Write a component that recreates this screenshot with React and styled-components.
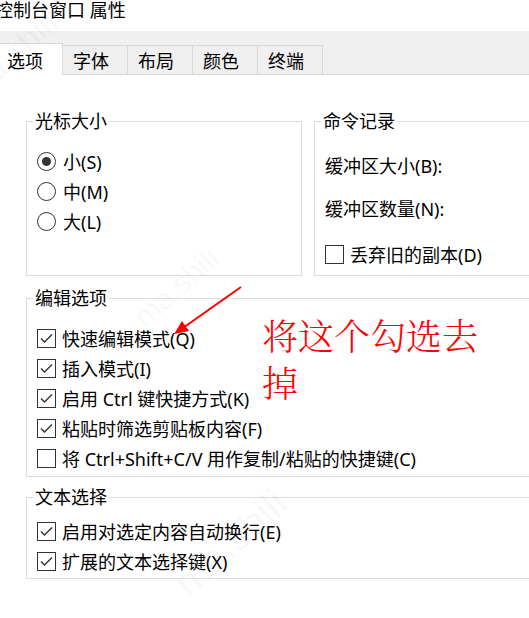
import React from "react";
import styled, { createGlobalStyle } from "styled-components";

const GlobalStyle = createGlobalStyle`
  html, body {
    margin: 0;
    padding: 0;
    background: #ffffff;
    overflow: hidden;
  }
  body {
    font-family: "Noto Sans", "Noto Sans CJK SC", "Microsoft YaHei", sans-serif;
    color: #000000;
  }
`;

const Page = styled.div`
  position: relative;
  width: 529px;
  height: 618px;
  overflow: hidden;
  background: #ffffff;
`;

const TitleBar = styled.div`
  height: 31px;
  margin-left: -5px;
  font-size: 18px;
  line-height: 20px;
  white-space: nowrap;
`;

const TabBar = styled.div`
  display: flex;
  align-items: flex-end;
  height: 43px;
  background: #f0f0f0;
  border-bottom: 1px solid #d9d9d9;
`;

const Tab = styled.div`
  position: relative;
  box-sizing: border-box;
  display: flex;
  align-items: center;
  height: ${(p) => (p.$active ? 32 : 29)}px;
  margin-bottom: ${(p) => (p.$active ? -1 : 0)}px;
  padding: ${(p) => (p.$active ? "0 19px 0 7px" : "0 18px 0 10px")};
  background: ${(p) => (p.$active ? "#ffffff" : "#f0f0f0")};
  border-top: 1px solid #d9d9d9;
  border-right: 1px solid #d9d9d9;
  font-size: 18px;
  white-space: nowrap;
`;

const Content = styled.div`
  display: flex;
  flex-direction: column;
  padding: 36px 0 0 26px;
`;

const TopRow = styled.div`
  display: flex;
  gap: 12px;
`;

const Group = styled.fieldset`
  box-sizing: border-box;
  flex: none;
  min-width: 0;
  width: ${(p) => p.$w}px;
  height: ${(p) => (p.$h ? `${p.$h}px` : "auto")};
  margin: ${(p) => p.$mt || 0}px 0 0 0;
  padding: ${(p) => p.$pt}px 0 ${(p) => p.$pb || 0}px 10px;
  border: 1px solid #dcdcdc;
  display: flex;
  flex-direction: column;
`;

const Legend = styled.legend`
  margin-left: -4px;
  padding: 0 2px;
  font-size: 18px;
  line-height: 20px;
  white-space: nowrap;
`;

const Row = styled.div`
  display: flex;
  align-items: center;
  gap: ${(p) => p.$gap || 6}px;
  height: 30px;
  margin-top: ${(p) => p.$mt || 0}px;
  font-size: 18px;
  white-space: nowrap;
`;

const RadioCircle = styled.span`
  box-sizing: border-box;
  flex: none;
  width: 19px;
  height: 19px;
  border: 1px solid #333333;
  border-radius: 50%;
  display: flex;
  align-items: center;
  justify-content: center;

  &::after {
    content: "";
    display: ${(p) => (p.$on ? "block" : "none")};
    width: 9px;
    height: 9px;
    border-radius: 50%;
    background: #333333;
  }
`;

const Box = styled.span`
  box-sizing: border-box;
  flex: none;
  width: 19px;
  height: 19px;
  border: 1px solid #333333;
  display: flex;
  align-items: center;
  justify-content: center;
`;

const Annotation = styled.div`
  position: absolute;
  left: 262px;
  top: 311px;
  width: 225px;
  font-family: "Noto Serif CJK SC", "Noto Sans CJK SC", serif;
  font-weight: 300;
  font-size: 36px;
  line-height: 47px;
  color: #ff0000;
`;

const ArrowSvg = styled.svg`
  position: absolute;
  left: 165px;
  top: 280px;
`;

const Watermark = styled.span`
  position: absolute;
  left: ${(p) => p.$x}px;
  top: ${(p) => p.$y}px;
  transform: rotate(-42deg);
  transform-origin: left bottom;
  font-family: "Liberation Sans", sans-serif;
  font-size: ${(p) => p.$size}px;
  color: rgba(0, 0, 0, 0.035);
  white-space: nowrap;
  pointer-events: none;
`;

const Radio = ({ on, children }) => (
  <Row $gap={7}>
    <RadioCircle $on={on} />
    {children}
  </Row>
);

const Check = ({ on, mt, children }) => (
  <Row $mt={mt}>
    <Box>
      {on && (
        <svg width="13" height="11" viewBox="0 0 13 11">
          <polyline points="1,5.5 4.5,9 12,1.5" fill="none" stroke="#333" strokeWidth="1.4" />
        </svg>
      )}
    </Box>
    {children}
  </Row>
);

const tabs = ["选项", "字体", "布局", "颜色", "终端"];

const App = () => {
  return (
    <Page>
      <GlobalStyle />
      <TitleBar>控制台窗口 属性</TitleBar>

      <TabBar>
        {tabs.map((t, i) => (
          <Tab key={t} $active={i === 0}>
            {t}
          </Tab>
        ))}
      </TabBar>

      <Content>
        <TopRow>
          <Group $w={276} $h={165} $pt={15}>
            <Legend>光标大小</Legend>
            <Radio on>小(S)</Radio>
            <Radio>中(M)</Radio>
            <Radio>大(L)</Radio>
          </Group>

          <Group $w={400} $h={165} $pt={19}>
            <Legend>命令记录</Legend>
            <Row>缓冲区大小(B):</Row>
            <Row $mt={13}>缓冲区数量(N):</Row>
            <Check mt={16}>丢弃旧的副本(D)</Check>
          </Group>
        </TopRow>

        <Group $w={560} $mt={12} $pt={15} $pb={3}>
          <Legend>编辑选项</Legend>
          <Check on>快速编辑模式(Q)</Check>
          <Check on>插入模式(I)</Check>
          <Check on>启用 Ctrl 键快捷方式(K)</Check>
          <Check on>粘贴时筛选剪贴板内容(F)</Check>
          <Check>将 Ctrl+Shift+C/V 用作复制/粘贴的快捷键(C)</Check>
        </Group>

        <Group $w={560} $mt={10} $pt={9} $pb={2}>
          <Legend>文本选择</Legend>
          <Check on>启用对选定内容自动换行(E)</Check>
          <Check on>扩展的文本选择键(X)</Check>
        </Group>
      </Content>

      <Watermark $x={-20} $y={70} $size={34}>ma.shili</Watermark>
      <Watermark $x={150} $y={300} $size={30}>ma.shili</Watermark>
      <Watermark $x={195} $y={560} $size={40}>ma.shili</Watermark>

      <ArrowSvg width="85" height="60" viewBox="0 0 85 60">
        <line x1="76" y1="7" x2="20" y2="46.5" stroke="#ff0000" strokeWidth="2" />
        <polygon points="9,54 24,51 17,41" fill="#ff0000" />
      </ArrowSvg>

      <Annotation>将这个勾选去掉</Annotation>
    </Page>
  );
};

export default App;
